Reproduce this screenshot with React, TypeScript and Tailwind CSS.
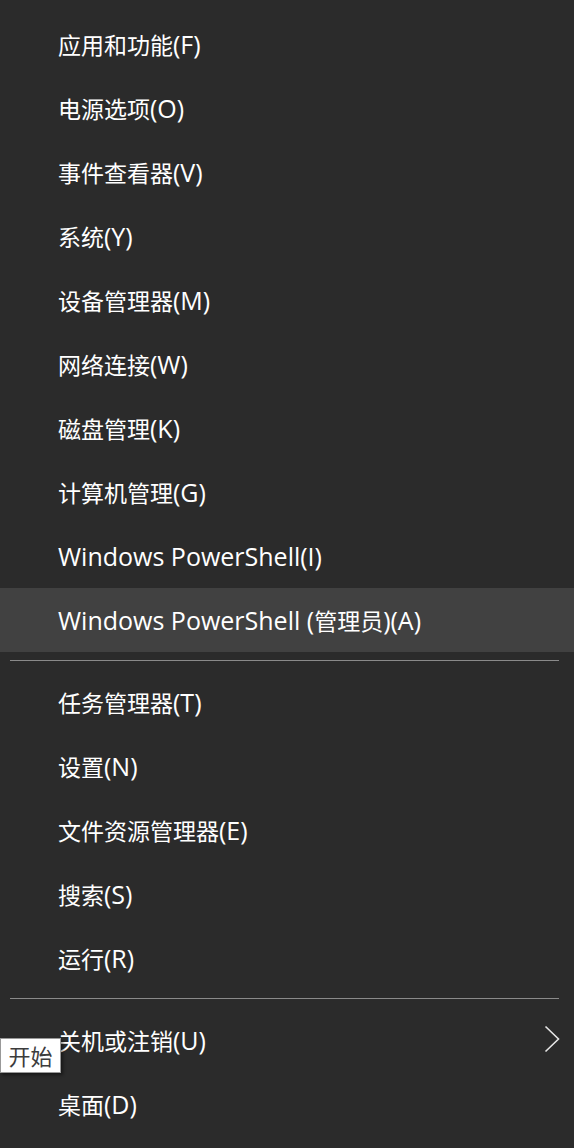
import React from "react";

const groups: string[][] = [
    [
        "应用和功能(F)",
        "电源选项(O)",
        "事件查看器(V)",
        "系统(Y)",
        "设备管理器(M)",
        "网络连接(W)",
        "磁盘管理(K)",
        "计算机管理(G)",
        "Windows PowerShell(I)",
        "Windows PowerShell (管理员)(A)",
    ],
    ["任务管理器(T)", "设置(N)", "文件资源管理器(E)", "搜索(S)", "运行(R)"],
    ["关机或注销(U)", "桌面(D)"],
];

// latin glyphs run a bit larger than the CJK ones in the shell font
const Label = ({ text }: { text: string }) => (
    <span className="text-[23px] leading-none text-white">
        {text.split(/([\u4e00-\u9fff]+)/).map((part, i) =>
            /[\u4e00-\u9fff]/.test(part) ? (
                <span key={i}>{part}</span>
            ) : (
                <span key={i} className="text-[25px]">
                    {part}
                </span>
            )
        )}
    </span>
);

const MenuItem = ({
    label,
    active,
    submenu,
}: {
    label: string;
    active?: boolean;
    submenu?: boolean;
}) => (
    <div
        className={`relative flex h-16 items-center pl-[58px] pr-4 ${
            active ? "bg-[#414141]" : ""
        }`}
    >
        <Label text={label} />
        {submenu && (
            <svg
                className="absolute right-[14px] top-[17px]"
                width="16"
                height="28"
                viewBox="0 0 16 28"
                fill="none"
            >
                <path
                    d="M1.5 1.5 L14.5 14 L1.5 26.5"
                    stroke="#e6e6e6"
                    strokeWidth="1.6"
                />
            </svg>
        )}
    </div>
);

const App: React.FC = () => {
    return (
        <div
            className="relative h-[1148px] w-[574px] overflow-hidden bg-[#2b2b2b] pt-[12px]"
            style={{
                fontFamily: '"Open Sans", "Noto Sans CJK SC", sans-serif',
            }}
        >
            {groups.map((items, gi) => (
                <div key={gi}>
                    {gi > 0 && (
                        <div className="pl-[10px] pr-[15px] pt-[8px] pb-[9px]">
                            <div className="h-px bg-[#8a8a8a]" />
                        </div>
                    )}
                    {items.map((label) => (
                        <MenuItem
                            key={label}
                            label={label}
                            active={label.startsWith("Windows PowerShell (")}
                            submenu={label.startsWith("关机")}
                        />
                    ))}
                </div>
            ))}

            {/* tooltip */}
            <div className="absolute left-0 top-[1038px] flex h-[35px] w-[61px] items-center justify-center border border-[#999] bg-white shadow-[2px_2px_3px_rgba(0,0,0,0.45)]">
                <span className="text-[22px] leading-none text-[#3c3c3c]">开始</span>
            </div>
        </div>
    );
};

export default App;
